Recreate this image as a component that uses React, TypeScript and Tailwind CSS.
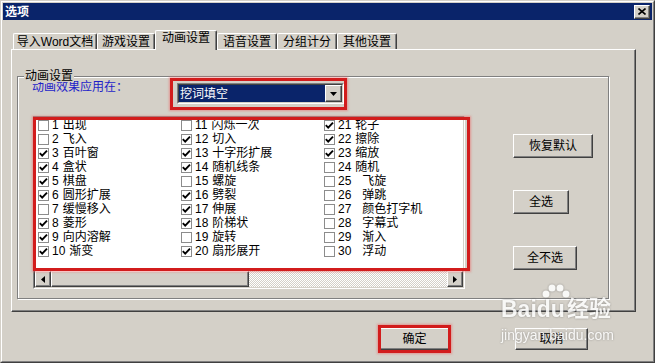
import React from "react";

type Item = { n: number; label: string; on: boolean; indent?: boolean };

const columns: Item[][] = [
  [
    { n: 1, label: "出现", on: false },
    { n: 2, label: "飞入", on: false },
    { n: 3, label: "百叶窗", on: true },
    { n: 4, label: "盒状", on: true },
    { n: 5, label: "棋盘", on: true },
    { n: 6, label: "圆形扩展", on: true },
    { n: 7, label: "缓慢移入", on: false },
    { n: 8, label: "菱形", on: true },
    { n: 9, label: "向内溶解", on: true },
    { n: 10, label: "渐变", on: true },
  ],
  [
    { n: 11, label: "闪烁一次", on: false },
    { n: 12, label: "切入", on: true },
    { n: 13, label: "十字形扩展", on: true },
    { n: 14, label: "随机线条", on: true },
    { n: 15, label: "螺旋", on: false },
    { n: 16, label: "劈裂", on: true },
    { n: 17, label: "伸展", on: true },
    { n: 18, label: "阶梯状", on: true },
    { n: 19, label: "旋转", on: false },
    { n: 20, label: "扇形展开", on: true },
  ],
  [
    { n: 21, label: "轮子", on: true },
    { n: 22, label: "擦除", on: true },
    { n: 23, label: "缩放", on: true },
    { n: 24, label: "随机", on: false },
    { n: 25, label: "飞旋", on: false, indent: true },
    { n: 26, label: "弹跳", on: false, indent: true },
    { n: 27, label: "颜色打字机", on: false, indent: true },
    { n: 28, label: "字幕式", on: false, indent: true },
    { n: 29, label: "渐入", on: false, indent: true },
    { n: 30, label: "浮动", on: false, indent: true },
  ],
];

const tabs = [
  { label: "导入Word文档", w: "w-[84px]" },
  { label: "游戏设置", w: "w-[58px]" },
  { label: "动画设置", w: "w-[62px]", active: true },
  { label: "语音设置", w: "w-[60px]" },
  { label: "分组计分", w: "w-[60px]" },
  { label: "其他设置", w: "w-[60px]" },
];

const raised =
  "flex items-center justify-center border border-t-white border-l-white border-r-[#404040] border-b-[#404040] bg-[#d4d0c8] shadow-[inset_-1px_-1px_0_#808080]";

function Check({ on }: { on: boolean }) {
  return (
    <span className="flex h-[11px] w-[11px] shrink-0 items-center justify-center border border-[#8c8c8c] bg-white">
      {on && (
        <svg width="9" height="9" viewBox="0 0 9 9">
          <path d="M0.8 4.2 L3.2 6.6 L8 1.6" fill="none" stroke="#000" strokeWidth="1.9" />
        </svg>
      )}
    </span>
  );
}

function Arrow({ dir }: { dir: "down" | "left" | "right" }) {
  const d =
    dir === "down" ? "M0 0 H7 L3.5 4 Z" : dir === "left" ? "M4 0 V7 L0 3.5 Z" : "M0 0 V7 L4 3.5 Z";
  const w = dir === "down" ? 7 : 4;
  const h = dir === "down" ? 4 : 7;
  return (
    <svg width={w} height={h} viewBox={`0 0 ${w} ${h}`}>
      <path d={d} fill="#000" />
    </svg>
  );
}

function Row({ item }: { item: Item }) {
  return (
    <div className="flex h-[14px] items-center">
      <Check on={item.on} />
      <span className="ml-[3px]">{item.n}</span>
      <span className={item.indent ? "ml-[11px]" : "ml-[4px]"}>{item.label}</span>
    </div>
  );
}

export default function App() {
  return (
    <div className="relative h-[363px] w-[655px] border border-t-[#d4d0c8] border-l-[#d4d0c8] border-r-[#404040] border-b-[#404040] bg-[#d4d0c8] font-['Liberation_Sans','Noto_Sans_CJK_SC',sans-serif] text-[12px] leading-[14px] text-black">
      <div className="flex h-full flex-col border border-t-white border-l-white border-r-[#808080] border-b-[#808080] p-px">
        {/* title */}
        <div className="flex h-[17px] shrink-0 items-center justify-between bg-[#0a246a] pl-[2px] pr-[2px]">
          <span className="font-bold text-white">选项</span>
          <span className={`${raised} h-[14px] w-[16px]`}>
            <svg width="8" height="7" viewBox="0 0 8 7">
              <path d="M0.5 0.5 L7.5 6.5 M7.5 0.5 L0.5 6.5" stroke="#000" strokeWidth="1.6" />
            </svg>
          </span>
        </div>

        <div className="px-[8px]">
          {/* tabs */}
          <div className="mt-[10px] flex h-[19px] items-end pl-[2px]">
            {tabs.map((t) =>
              t.active ? (
                <div
                  key={t.label}
                  className={`${t.w} relative z-10 mb-[-1px] flex h-[20px] justify-center rounded-t-[2px] border-t border-l border-r border-t-white border-l-white border-r-[#404040] bg-[#d4d0c8] shadow-[inset_-1px_0_0_#808080]`}
                >
                  {t.label}
                </div>
              ) : (
                <div
                  key={t.label}
                  className={`${t.w} flex h-[16px] justify-center rounded-t-[2px] border-t border-l border-r border-t-white border-l-white border-r-[#404040] pt-px shadow-[inset_-1px_0_0_#808080]`}
                >
                  {t.label}
                </div>
              ),
            )}
          </div>

          {/* panel */}
          <div className="h-[263px] w-[625px] border border-t-white border-l-white border-r-[#404040] border-b-[#404040] shadow-[inset_-1px_-1px_0_#808080]">
            <div className="relative ml-[5px] mt-[26px] h-[223px] w-[592px] border border-[#808080] pl-[14px] shadow-[inset_1px_1px_0_#fff,1px_1px_0_#fff]">
              <span className="absolute left-[6px] top-[-7px] bg-[#d4d0c8] px-px leading-[12px]">动画设置</span>

              <div className="mt-px flex items-start">
                <span className="mt-[3px] w-[138px] shrink-0 leading-[12px] text-[#1e1ec8]">动画效果应用在：</span>
                <div className="h-[32px] w-[177px] border-[3px] border-[#d21c1c] pl-[4px] pt-[2px] shadow-[0_0_2px_1px_rgba(235,110,110,0.6)]">
                  <div className="h-[21px] w-[167px] border border-t-[#808080] border-l-[#808080] border-b-white border-r-white">
                    <div className="flex h-full border border-t-[#404040] border-l-[#404040] border-b-[#d4d0c8] border-r-[#d4d0c8] bg-white">
                      <div className="flex flex-1 items-center bg-[#0a246a] pl-px text-white">挖词填空</div>
                      <div className={`${raised} w-[17px]`}>
                        <Arrow dir="down" />
                      </div>
                    </div>
                  </div>
                </div>
              </div>

              <div className="mt-[6px] flex pl-px">
                <div className="relative h-[173px] w-[432px] border border-t-[#808080] border-l-[#808080] border-b-white border-r-white">
                  <div className="flex h-full flex-col border border-t-[#404040] border-l-[#404040] border-b-[#d4d0c8] border-r-[#d4d0c8] bg-white">
                    <div className="flex overflow-hidden pl-[3px]">
                      {columns.map((col, i) => (
                        <div key={i} className="flex w-[143px] shrink-0 flex-col">
                          {col.map((item) => (
                            <Row key={item.n} item={item} />
                          ))}
                        </div>
                      ))}
                    </div>
                    <div className="flex-1" />
                    <div className="flex h-[16px] shrink-0">
                      <div className={`${raised} w-[16px]`}>
                        <Arrow dir="left" />
                      </div>
                      <div className={`${raised} w-[198px]`} />
                      <div className="flex-1 bg-[repeating-conic-gradient(#d4d0c8_0_25%,#ffffff_0_50%)] bg-[length:2px_2px]" />
                      <div className={`${raised} w-[16px]`}>
                        <Arrow dir="right" />
                      </div>
                    </div>
                  </div>
                  <div className="pointer-events-none absolute left-[-1px] top-0 h-[154px] w-[437px] border-[3px] border-[#d21c1c] shadow-[0_0_2px_1px_rgba(235,110,110,0.6)]" />
                </div>

                <div className="ml-[48px] mt-[18px] flex flex-col items-start gap-[32px]">
                  <button className={`${raised} h-[24px] w-[80px]`}>恢复默认</button>
                  <button className={`${raised} h-[24px] w-[56px]`}>全选</button>
                  <button className={`${raised} h-[24px] w-[64px]`}>全不选</button>
                </div>
              </div>
            </div>
          </div>

          {/* bottom buttons */}
          <div className="mt-[16px] flex justify-end gap-[64px] pr-[56px]">
            <div className="relative">
              <button className={`${raised} h-[22px] w-[73px]`}>确定</button>
              <div className="pointer-events-none absolute left-0 top-[-3px] h-[28px] w-[73px] border-[3px] border-[#d21c1c] shadow-[0_0_2px_1px_rgba(235,110,110,0.6)]" />
            </div>
            <button className={`${raised} h-[22px] w-[73px]`}>取消</button>
          </div>
        </div>
      </div>

      {/* watermark */}
      <div className="pointer-events-none absolute left-[500px] top-[296px] flex flex-col text-white opacity-85 drop-shadow-[0_0_1px_rgba(90,90,90,0.6)]">
        <div className="relative flex items-end text-[23px] font-bold leading-[24px]">
          <span>Bai</span>
          <span className="relative">
            <svg className="absolute left-[4px] top-[-14px]" width="30" height="16" viewBox="0 0 30 16">
              <circle cx="5" cy="11" r="3.5" fill="#fff" />
              <circle cx="11" cy="5" r="3.5" fill="#fff" />
              <circle cx="19" cy="5" r="3.5" fill="#fff" />
              <circle cx="25" cy="11" r="3.5" fill="#fff" />
            </svg>
            du
          </span>
          <span className="ml-[2px] text-[22px]">经验</span>
        </div>
        <div className="mt-[6px] text-[14px] leading-[16px]">jingyan.baidu.com</div>
      </div>
    </div>
  );
}
